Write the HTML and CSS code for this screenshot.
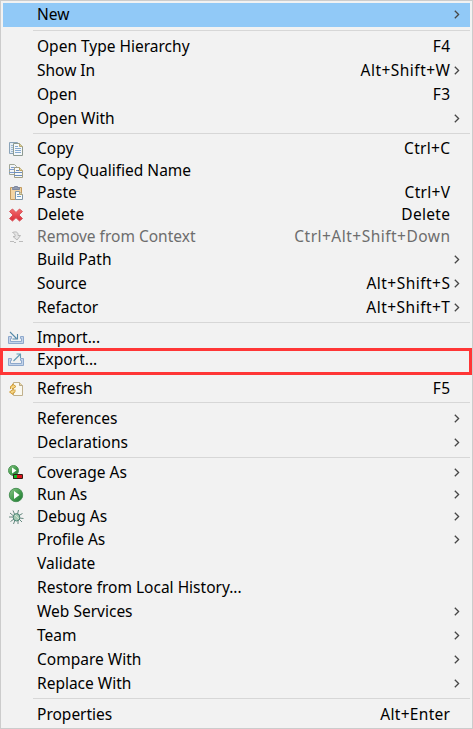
FILE: index.html
```html
<!DOCTYPE html>
<html lang="en">
<head>
<meta charset="utf-8">
<title>Context menu</title>
<link rel="stylesheet" href="styles.css">
</head>
<body>
<svg class="defs" width="0" height="0" aria-hidden="true">
  <defs>
    <linearGradient id="green" x1="0" y1="0" x2="1" y2="1"><stop offset="0" stop-color="#8fc58b"/><stop offset=".5" stop-color="#48a050"/><stop offset="1" stop-color="#19752f"/></linearGradient>
    <linearGradient id="red" x1="0" y1="0" x2="0" y2="1"><stop offset="0" stop-color="#f36b6b"/><stop offset="1" stop-color="#d92d38"/></linearGradient>
    <symbol id="chev" viewBox="0 0 6 9"><path d="M.8.7 4.6 4.5.8 8.3" fill="none" stroke="#484848" stroke-width="1.3"/></symbol>
    <symbol id="tray" viewBox="0 0 16 16"><path d="M.5 6.500h3v2h-1v3h11v-3h-1v-2h3v7H.5z" fill="#c3d4ea" stroke="#8ea8cc"/></symbol>
  </defs>
</svg>
<ul class="menu">
  <li class="item active"><span class="label">New</span><svg class="chev"><use href="#chev"/></svg></li>
  <li class="sep first"></li>
  <li class="item"><span class="label">Open Type Hierarchy</span><span class="key">F4</span></li>
  <li class="item"><span class="label">Show In</span><span class="key chord">Alt+Shift+W</span><svg class="chev"><use href="#chev"/></svg></li>
  <li class="item"><span class="label">Open</span><span class="key">F3</span></li>
  <li class="item"><span class="label">Open With</span><svg class="chev"><use href="#chev"/></svg></li>
  <li class="sep"></li>
  <li class="item compact">
    <svg class="icon" viewBox="0 0 16 16"><path d="M1.500 1.500h8v11h-8z" fill="#e4edf4" stroke="#8aa3b8"/><path d="M3 4.500h3M3 6.500h3M3 8.500h3M3 10.500h3" stroke="#9db7d2"/><path d="M5.500 2.500h6l3 3v9h-9z" fill="#f5f8fa" stroke="#8d9a90"/><path d="M11.500 2.500v3h3" fill="#e4d18f" stroke="#b7a979"/><path d="M7 5.500h3M7 7.500h6M7 9.500h6M7 11.500h6" stroke="#87abd0"/></svg>
    <span class="label">Copy</span><span class="key">Ctrl+C</span></li>
  <li class="item compact">
    <svg class="icon" viewBox="0 0 16 16"><path d="M1.500 1.500h5l2 2v8h-7z" fill="#f2f5f7" stroke="#a0a595"/><path d="M3 4.500h4M1 6.500h6M1 9.500h6" stroke="#7c9acb"/><path d="M6.500 4.500h5l3 3v7h-8z" fill="#f7f8f6" stroke="#a29f85"/><path d="M11.500 4.500v3h3" fill="#ead69b" stroke="#bca265"/><path d="M8 7.500h3M6 9.500h8M6 12.500h8" stroke="#6c8dbd"/></svg>
    <span class="label">Copy Qualified Name</span></li>
  <li class="item compact">
    <svg class="icon" viewBox="0 0 16 16"><path d="M2.500 2.500h11v12h-11z" fill="#f2d4a3" stroke="#c29b60"/><path d="M4.500 3.500v-1h2v-1h3v1h2v2h-7z" fill="#929cb0" stroke="#7c87a0"/><path d="M7.500 6.500h4l3 3v5h-7z" fill="#f8fbfc" stroke="#8096a7"/><path d="M11.500 6.500v3h3" fill="#e3d49e" stroke="#b2a579"/><path d="M9 9.500h2M9 11.500h4" stroke="#70a0ca"/></svg>
    <span class="label">Paste</span><span class="key">Ctrl+V</span></li>
  <li class="item compact">
    <svg class="icon" viewBox="0 0 16 16"><path d="M4.500 2 8 5.500 11.500 2 14.500 4.500 11 8l3.500 3.500-3 2.500L8 10.700 4.500 14l-3-2.500L5 8 1.500 4.500z" fill="url(#red)" stroke="#d8545b" stroke-linejoin="round"/></svg>
    <span class="label">Delete</span><span class="key">Delete</span></li>
  <li class="item compact disabled">
    <svg class="icon" viewBox="0 0 16 16"><path d="M4.500 3.500c4-1.500 6 0 5.500 3h2.500L9 11 5 7.500h2c.7-2-.8-3-2.500-4z" fill="#e5e5e5" stroke="#b8b8b8"/><path d="M2 12.500h4M11 12.500h4M6 13.500h2" stroke="#bbb"/></svg>
    <span class="label">Remove from Context</span><span class="key chord">Ctrl+Alt+Shift+Down</span></li>
  <li class="item"><span class="label">Build Path</span><svg class="chev"><use href="#chev"/></svg></li>
  <li class="item"><span class="label">Source</span><span class="key chord">Alt+Shift+S</span><svg class="chev"><use href="#chev"/></svg></li>
  <li class="item"><span class="label">Refactor</span><span class="key chord">Alt+Shift+T</span><svg class="chev"><use href="#chev"/></svg></li>
  <li class="sep"></li>
  <li class="item compact">
    <svg class="icon" viewBox="0 0 16 16"><use href="#tray"/><path d="M2 2 8.500 8.500M9.500 4v5h-5" fill="none" stroke="#568aa9" stroke-width="1.100"/></svg>
    <span class="label">Import...</span></li>
  <li class="item compact marked">
    <svg class="icon" viewBox="0 0 16 16"><use href="#tray"/><path d="M5.500 9 12 2.500M8.500 2h4v4" fill="none" stroke="#659bb2" stroke-width="1.100"/></svg>
    <span class="label">Export...</span></li>
  <li class="sep"></li>
  <li class="item compact">
    <svg class="icon" viewBox="0 0 16 16"><path d="M5.500 1.500h6l3 3v10h-9z" fill="#faf8ef" stroke="#c0b08c"/><path d="M11.500 1.500v3h3" fill="#ead9a9" stroke="#b9a987"/><path d="M2.500 8V6q0-1.500 2-1.500V3L8 5.500 4.500 8V7M7 8.500v2q0 1.500-2 1.500v1.500L1.500 11 5 8.500v1" fill="#f5d583" stroke="#d19d3a"/></svg>
    <span class="label">Refresh</span><span class="key">F5</span></li>
  <li class="sep"></li>
  <li class="item"><span class="label">References</span><svg class="chev"><use href="#chev"/></svg></li>
  <li class="item"><span class="label">Declarations</span><svg class="chev"><use href="#chev"/></svg></li>
  <li class="sep"></li>
  <li class="item compact">
    <svg class="icon" viewBox="0 0 16 16"><circle cx="5.500" cy="5.500" r="5" fill="url(#green)" stroke="#4e9556"/><path d="M4 2.500v6l4.500-3z" fill="#fff"/><path d="M5 10h4v4H5z" fill="#12be29"/><path d="M9 10h5v4H9z" fill="#d9141c"/><path d="M5.500 9.500h9v4h-9z" fill="none" stroke="#362015"/></svg>
    <span class="label">Coverage As</span><svg class="chev"><use href="#chev"/></svg></li>
  <li class="item compact">
    <svg class="icon" viewBox="0 0 16 16"><circle cx="8" cy="8" r="6.700" fill="url(#green)" stroke="#4b9258"/><path d="M6 4v8l5.500-4z" fill="#fff"/></svg>
    <span class="label">Run As</span><svg class="chev"><use href="#chev"/></svg></li>
  <li class="item compact">
    <svg class="icon" viewBox="0 0 16 16"><path d="M5 1.500 6.500 5M10.500 1 9.500 5M2 4l3 2.500M14.500 4.500 11 6.500M1 8h4M15.500 9.500 11 9M2.500 12.500 6 10M5.500 15 7 11M10 15V11M14 13l-3-3" stroke="#577d73" stroke-width=".9"/><ellipse cx="8.500" cy="8.300" rx="3.300" ry="3.700" fill="#a3c9b3" stroke="#4a8272"/><path d="m7 6 4 4" stroke="#d3e5ce"/></svg>
    <span class="label">Debug As</span><svg class="chev"><use href="#chev"/></svg></li>
  <li class="item"><span class="label">Profile As</span><svg class="chev"><use href="#chev"/></svg></li>
  <li class="item"><span class="label">Validate</span></li>
  <li class="item"><span class="label">Restore from Local History...</span></li>
  <li class="item"><span class="label">Web Services</span><svg class="chev"><use href="#chev"/></svg></li>
  <li class="item"><span class="label">Team</span><svg class="chev"><use href="#chev"/></svg></li>
  <li class="item"><span class="label">Compare With</span><svg class="chev"><use href="#chev"/></svg></li>
  <li class="item"><span class="label">Replace With</span><svg class="chev"><use href="#chev"/></svg></li>
  <li class="sep"></li>
  <li class="item"><span class="label">Properties</span><span class="key">Alt+Enter</span></li>
</ul>
</body>
</html>
```
FILE: styles.css
```css
*, *::before, *::after { box-sizing: border-box; }
body { margin: 0; overflow: hidden; }
.defs { position: absolute; }
.menu {
  list-style: none;
  margin: 0;
  width: 473px;
  height: 729px;
  padding: 2px;
  border: 1px solid #ccc;
  background: #f2f2f2;
  color: #000;
  font: 15.5px/20px "Noto Sans", "Open Sans", sans-serif;
}
.item {
  display: grid;
  grid-template-columns: 34px 1fr auto 20px;
  align-items: center;
  height: 24px;
  white-space: nowrap;
}
.compact { height: 22px; }
.active { background: #91c9f7; }
.disabled { color: #6d6d6d; }
.label { grid-column: 2; padding-bottom: 2px; }
.key { grid-column: 3; padding-bottom: 2px; letter-spacing: 0.3px; margin-right: -0.3px; }
.chord { letter-spacing: 0.48px; margin-right: -0.48px; }
.icon { grid-column: 1; grid-row: 1; width: 16px; height: 16px; margin-left: 5px; }
.chev { grid-column: 4; width: 6px; height: 9px; margin: 0 0 2px 4px; }
.sep { height: 7px; padding: 2px 0 0 30px; }
.sep::before { content: ""; display: block; height: 1px; background: #d7d7d7; }
.sep.first { height: 8px; padding-top: 3px; }
.marked { position: relative; }
.marked::after {
  content: "";
  position: absolute;
  left: -3px;
  top: -1px;
  width: 472px;
  height: 27px;
  border: 3px solid #ff3636;
}
```
